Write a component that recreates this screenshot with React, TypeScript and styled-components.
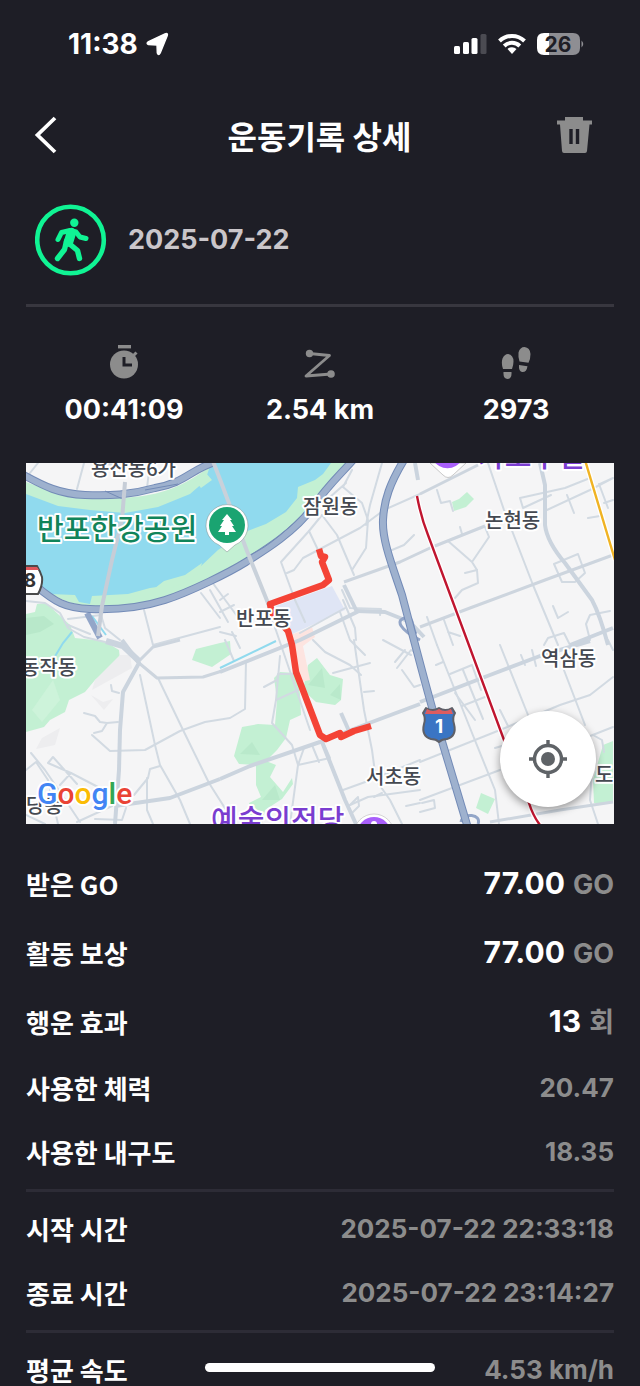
import React from "react";
import styled, { createGlobalStyle } from "styled-components";

const latin = `Inter, "Noto Sans CJK KR", sans-serif`;
const korean = `"Noto Sans CJK KR", Inter, sans-serif`;

const GlobalStyle = createGlobalStyle`
  *, *::before, *::after { box-sizing: border-box; }
  body { margin: 0; background: #1e1e26; }
`;

const Screen = styled.div`
  position: relative;
  height: 100vh;
  overflow: hidden;
  display: flex;
  flex-direction: column;
  background: #1e1e26;
  color: #fff;
  font-family: ${latin};
`;

const StatusBar = styled.div`
  flex: none;
  height: 88px;
  padding: 0 56px 0 68px;
  display: flex;
  align-items: center;
  justify-content: space-between;
`;

const StatusGroup = styled.div<{ $gap: number }>`
  display: flex;
  align-items: center;
  gap: ${(p) => p.$gap}px;
`;

const Clock = styled.span`
  font-size: 28px;
  line-height: 32px;
  font-weight: 700;
`;

const Header = styled.header`
  flex: none;
  height: 94px;
  padding: 0 48px 0 30px;
  display: grid;
  grid-template-columns: 52px 1fr 35px;
  align-items: center;
`;

const Title = styled.h1`
  margin: 0;
  text-align: center;
  font-family: ${korean};
  font-size: 32px;
  line-height: 36px;
  font-weight: 700;
`;

const IconButton = styled.button`
  display: flex;
  padding: 0;
  border: 0;
  background: none;
  color: inherit;
  cursor: pointer;
`;

const Content = styled.main`
  flex: 1;
  min-height: 0;
  overflow-y: auto;
  scrollbar-width: none;
  padding: 0 26px;
`;

const Activity = styled.section`
  height: 116px;
  padding-left: 9px;
  display: flex;
  align-items: center;
  gap: 21px;
`;

const ActivityDate = styled.time`
  font-size: 27px;
  line-height: 32px;
  font-weight: 700;
  color: #cac6ca;
`;

const Rule = styled.hr<{ $strong?: boolean }>`
  height: 3px;
  margin: ${(p) => (p.$strong ? 6 : 5)}px 0 ${(p) => (p.$strong ? 0 : 5)}px;
  border: 0;
  background: ${(p) => (p.$strong ? "#38373f" : "#2d2c36")};
`;

const Stats = styled.section`
  display: grid;
  grid-template-columns: repeat(3, 1fr);
  padding: 38px 0 37px;
`;

const Stat = styled.div`
  display: flex;
  flex-direction: column;
  align-items: center;
  gap: 13px;
  color: #8c8c8c;
`;

const StatValue = styled.span`
  color: #fff;
  font-size: 27px;
  line-height: 32px;
  font-weight: 700;
`;

const MapFrame = styled.section`
  position: relative;
  overflow: hidden;
  background: #f5f5f6;
`;

const MapDrawing = styled.svg`
  display: block;
  width: 100%;
  height: auto;
`;

const MapText = styled.text`
  font-family: ${korean};
  font-weight: 500;
  stroke: #fff;
  stroke-width: 4px;
  stroke-linejoin: round;
  paint-order: stroke;
`;

const PlaceName = styled(MapText)`
  font-size: 20px;
  fill: #454951;
`;

const Landmark = styled(MapText)<{ $park?: boolean }>`
  font-size: 29px;
  fill: ${(p) => (p.$park ? "#11845a" : "#7a3dd0")};
`;

const Brand = styled(MapText)`
  font-family: Roboto, sans-serif;
  font-size: 30px;
`;

const ShieldNumber = styled.text`
  font-family: Inter, sans-serif;
  font-size: 19px;
  font-weight: 700;
  text-anchor: middle;
`;

const LocateButton = styled.button`
  position: absolute;
  right: 18px;
  bottom: 17px;
  width: 96px;
  height: 96px;
  padding: 0;
  border: 0;
  border-radius: 50%;
  background: #fff;
  box-shadow: 0 3px 8px rgba(0, 0, 0, 0.4);
  display: flex;
  align-items: center;
  justify-content: center;
  cursor: pointer;
`;

const Details = styled.section`
  padding: 25px 0 40px;
`;

const List = styled.dl`
  margin: 0;
`;

const Row = styled.div<{ $tall?: boolean }>`
  height: ${(p) => (p.$tall ? 69 : 64)}px;
  display: flex;
  align-items: center;
  justify-content: space-between;
`;

const Label = styled.dt`
  font-family: ${korean};
  font-size: 26px;
  line-height: 30px;
  font-weight: 700;
`;

const Value = styled.dd`
  margin: 0;
  display: flex;
  align-items: baseline;
  gap: 8px;
  font-size: 26px;
  line-height: 32px;
  font-weight: 700;
  color: #8c8c8c;
`;

const Amount = styled.span`
  font-size: 30px;
  color: #fff;
`;

const Unit = styled.span`
  font-size: 27px;
`;

const HomeIndicator = styled.div`
  position: absolute;
  left: 32%;
  right: 32%;
  bottom: 14px;
  height: 9px;
  border-radius: 5px;
  background: #fff;
`;

const BatteryLevel = styled.text`
  font-family: Inter, sans-serif;
  font-size: 21px;
  font-weight: 700;
  text-anchor: middle;
  fill: #1e1e26;
`;

const minorRoads = [
  // north bank
  "M26 478 L38 463 M77 489 L84 463 M147 488 L150 463 M100 463 L150 470",
  // banpo and jamwon
  "M268 607 L310 730",
  "M322 515 L337 535 L354 575 M322 515 L309 531 L281 562 L295 600",
  "M309 531 L319 552 M343 487 L362 503 L368 520 L366 548 L352 570",
  "M382 463 L370 505 L366 525 M287 573 L294 570 L303 558 L360 528 L384 510 L420 494",
  "M343 487 L352 470 M330 497 L346 483 M392 550 L404 545 L414 535",
  "M144 610 L153 645 L220 627 M210 590 L228 622 M201 593 L220 618",
  "M220 600 L228 594 M220 612 L234 605 M212 582 L240 620 M220 632 L236 636",
  "M295 600 L305 622 M300 633 L345 608 M343 600 L355 628 L356 640",
  "M342 590 L350 608 L381 609 L380 615 M340 612 L350 640 L365 655",
  // centre
  "M246 661 L245 709 L230 718 L205 722 L180 731 L145 750 L110 751 L92 735",
  "M225 640 L234 661 M232 632 L240 648",
  "M313 640 L325 652 L350 665 L361 675 M280 656 L276 700 L272 723 L292 745 L298 765 L290 824",
  "M264 687 L277 680 L278 674 L298 674 M276 700 L298 690",
  "M354 640 L364 710 L372 750 L376 780 L390 800 L402 824",
  "M333 673 L370 663 M364 692 L374 691",
  "M298 765 L330 758 L322 740 M312 745 L319 762 M298 765 L304 748",
  "M343 790 L368 781 L420 760 M350 805 L368 797 L420 790",
  "M350 805 L358 797 L359 806 L352 813 M374 797 L382 793 M406 806 L420 803",
  "M383 640 L411 655 M397 668 L411 650 L420 655 M402 670 L414 687 L420 685 M395 662 L405 650",
  // west
  "M140 675 L155 745 L160 765 L180 800 L190 824",
  "M158 678 L184 732 L209 783 L235 824",
  "M84 713 L95 716 L100 722 L107 723 L118 722 M107 723 L102 731 L94 733",
  "M111 685 L112 691 L119 693 M48 763 L53 757 L77 784 M48 763 L71 773 L60 785",
  "M31 753 L45 770 L60 792 L80 822 M26 770 L36 762 L48 780 L58 824",
  "M71 773 L98 787 M134 795 L148 778 L150 769 L160 766 M147 778 L147 810 L153 824",
  "M26 815 L45 824 M77 822 L112 806 M95 819 L122 820 L126 808",
  "M26 601 L45 603 L60 613 L68 628 L84 637 L105 642 M68 625 L90 634",
  "M68 619 L101 615 M101 615 L105 628 L120 640",
  // east
  "M488 463 L504 510 L533 585 L558 645",
  "M437 490 L441 503 L450 501 L453 511 M460 527 L462 534",
  "M448 541 L472 562 L489 537 L485 527 M472 562 L477 570 L478 583 L462 590 L455 598",
  "M465 573 L477 570 M520 498 L565 488 L590 478 M520 498 L523 508 L551 495",
  "M547 510 L590 490 L613 478 M567 495 L574 513 M599 484 L608 508 M600 484 L613 478 M588 518 L600 516",
  "M613 500 L604 503 M554 564 L578 554 L585 573 L575 582 L562 582 L554 564",
  "M553 606 L558 618 L568 612 M544 645 L548 638 L564 633 L570 645",
  "M610 611 L590 615 L586 624 L590 640 M427 617 L437 645 M444 620 L453 645 M448 632 L460 636",
  "M500 645 L530 720 L535 745 M562 665 L585 725",
  "M437 645 L470 728 L495 790 L499 824",
  "M450 674 L472 665 M463 670 L483 719 M472 665 L481 690 M455 693 L475 720 M462 706 L485 697",
  "M436 665 L443 662 M521 655 L525 665 M532 650 L536 666 M500 710 L508 726",
  "M420 762 L500 730 L560 705 L590 695 L613 677 M613 727 L580 740",
  "M420 800 L500 770 M495 748 L505 745 M420 812 L435 808 L434 800 L422 803",
  "M593 735 L602 740 L604 752 M592 770 L590 800 L598 824 M608 640 L613 650",
];

const mediumRoads = [
  "M344 582 L400 562 L430 548 L485 526",
  "M420 627 L470 608 L545 580 L613 555",
  "M490 822 L560 810 L613 802",
  "M420 494 L478 465",
  "M139 663 L157 678 L203 677 L222 671",
  "M139 661 L153 647 L180 640",
];

const mainRoads = [
  "M344 585 L357 612 L300 640 L220 672",
  "M357 611 L385 612 L410 622 L424 637",
  "M420 702 L490 675 L540 656 L590 641",
  "M570 645 L613 628",
  "M220 779 L250 766 L320 742 L372 722 L420 704",
  "M322 742 L345 800 L356 824",
  "M115 806 L170 798 L220 779",
  "M540 463 L545 485 L545 525 Q547 542 565 563 L592 600 Q600 615 608 645",
  "M415 463 L418 480",
  "M341 713 L349 731",
  "M122 640 L139 663 L123 692 L120 730 L119 770 L115 824",
];

const highways = [
  "M20 473 C45 487 60 494 85 495 S130 495 155 488 C185 483 190 470 215 462",
  "M36 586 C55 602 65 608 90 609 S140 608 165 600 S230 572 246 562 S295 532 312 508 S340 475 353 460",
  "M404 460 C390 483 384 500 383 520 S392 565 402 595 C414 640 428 695 438 728 L468 828",
];

const subwayLine = "M417 496 C420 512 424 525 428 535 L467 640 L504 740 L529 803 Q533 816 540 825";
const yellowLine = "M585 460 L615 560";

function SeoulMap() {
  return (
    <MapDrawing viewBox="26 463 588 361" role="img" aria-label="이동 경로 지도">
      <rect x="26" y="463" width="588" height="361" fill="#f5f5f6" />

      {/* river and its banks */}
      <path d="M26 482 C60 495 90 500 120 498 C165 496 185 485 215 463 H350 L312 508 C290 535 240 566 200 583 C160 603 130 608 90 606 C65 604 50 595 26 575Z" fill="#c3f0d3" />
      <path d="M26 494 L58 506 L90 510 L125 513 L158 507 L190 494 L205 481 L211 463 H331 L323 474 L315 480 L298 487 L297 498 L286 512 L266 524 L245 532 L218 550 L200 567 L178 584 L150 588 L128 594 L92 596 L90 604 L79 602 L75 595 L50 594 L26 575Z" fill="#90daee" />
      <path d="M155 588 L164 581 L185 575 L202 563 L199 573 L181 584 L171 588Z M195 481 L206 473 L212 480 L201 488Z" fill="#c3f0d3" />

      {/* parks */}
      <path d="M26 614 L35 612 L37 604 L46 603 L70 625 L75 638 L104 641 L119 650 L120 660 L95 680 L85 692 L69 700 L65 712 L50 720 L44 727 L26 732Z" fill="#c3f0d3" />
      <path d="M26 618 L44 616 L54 624 L40 632 L26 635Z" fill="#b8e8ca" />
      <path d="M32 710 L46 690 L53 680 L60 700 L42 722Z" fill="#cdf3da" />
      <path d="M54 658 L63 643 L72 632" fill="none" stroke="#90daee" strokeWidth="2" />
      <path d="M192 660 L196 649 L220 643 L230 641 L231 654 L212 667Z" fill="#c3f0d3" />
      <path d="M303 690 L308 665 L317 658 L330 675 L343 679 L341 700 L335 705 L316 702Z" fill="#c3f0d3" />
      <path d="M274 678 L280 672 L296 673 L300 694 L301 715 L290 720 L286 738 L277 750 L266 761 L276 765 L270 777 L283 792 L292 778 L293 784 L282 799 L265 810 L262 824 L250 815 L249 803 L261 797 L256 785 L256 765 L239 764 L234 756 L242 727 L258 724 L275 725 L277 700Z" fill="#c3f0d3" />
      <path d="M240 754 L252 742 L260 755Z M262 800 L275 785 L280 800Z M308 685 L322 668 L325 688Z M330 695 L340 684 L341 700Z" fill="#b9e9cb" />
      <path d="M452 502 L459 499 L467 492 L474 499 L466 507 L454 511Z M481 793 L495 799 L488 814 L476 808Z M603 745 L613 741 L613 803 L594 803 L593 780Z" fill="#c3f0d3" />
      <path d="M120 655 L95 680 L92 690 L132 668 L130 655Z M91 695 L103 702 L113 699 L104 710Z M36 749 L42 738 L60 728 L55 745Z" fill="#ededef" />

      {/* shopping and hospital blocks */}
      <path d="M276 606 L332 586 L345 610 L288 636Z" fill="#dfe5f5" />
      <path d="M288 636 L312 627 L315 637 L303 646 L310 680 L300 682 L294 655Z" fill="#fde4e0" />

      <g fill="none" stroke="#d2dae2" strokeWidth="2" strokeLinejoin="round" strokeLinecap="round">
        {minorRoads.map((d) => <path key={d} d={d} />)}
      </g>
      <g fill="none" stroke="#cdd5de" strokeWidth="3" strokeLinejoin="round">
        {mediumRoads.map((d) => <path key={d} d={d} />)}
      </g>
      <g fill="none" stroke="#cbd4de" strokeWidth="4" strokeLinejoin="round">
        {mainRoads.map((d) => <path key={d} d={d} />)}
        <path d="M106 641 L123 646 L139 661" strokeWidth="6" />
      </g>
      <path d="M220 668 L276 641 M92 616 L106 635" fill="none" stroke="#90daee" strokeWidth="2" />

      {/* expressways */}
      <path d="M87 613 L100 638" fill="none" stroke="#93a6c8" strokeWidth="6" />
      <path d="M420 640 C400 630 395 620 405 618 S411 627 416 634 M461 822 C463 812 482 814 478 824" fill="none" stroke="#93a6c8" strokeWidth="3" />
      <g fill="none" stroke="#738bb7" strokeWidth="8">
        {highways.map((d) => <path key={d} d={d} />)}
      </g>
      <g fill="none" stroke="#9eb1ce" strokeWidth="6">
        {highways.map((d) => <path key={d} d={d} />)}
      </g>
      <path d="M250 555 C270 546 290 527 305 512 M145 490 L178 484 M105 491 L125 500" fill="none" stroke="#738bb7" strokeWidth="1" />

      {/* bridges */}
      <path d="M125 482 L122 520 L112 560 L102 606 L98 636" fill="none" stroke="#c6cdd7" strokeWidth="4" />
      <path d="M211 456 L221 482 L247 551 L270 608" fill="none" stroke="#c9d1da" strokeWidth="4" />

      {/* subway lines */}
      <g fill="none">
        <path d={subwayLine} stroke="#fff" strokeWidth="5" />
        <path d={subwayLine} stroke="#c0152f" strokeWidth="2.400" />
        <path d={yellowLine} stroke="#fff" strokeWidth="5" />
        <path d={yellowLine} stroke="#f0b323" strokeWidth="2.400" />
      </g>

      {/* recorded route */}
      <path d="M319 549 L321 556 L325 557 L322 562 L329 580 L323 585 L270 604 L272 613 L288 631 L292 645 L296 672 L301 685 L320 735 L326 739 L340 733 L341 737 L354 731 L371 726" fill="none" stroke="#f44336" strokeWidth="6.500" strokeLinejoin="round" />

      <PlaceName x="91" y="476">용산동6가</PlaceName>
      <PlaceName x="303" y="514">잠원동</PlaceName>
      <PlaceName x="485" y="528">논현동</PlaceName>
      <PlaceName x="236" y="626">반포동</PlaceName>
      <PlaceName x="541" y="666">역삼동</PlaceName>
      <PlaceName x="21" y="675">동작동</PlaceName>
      <PlaceName x="366" y="784">서초동</PlaceName>
      <PlaceName x="595" y="782">도</PlaceName>
      <PlaceName x="26" y="813">당동</PlaceName>
      <Landmark $park x="37" y="540">반포한강공원</Landmark>
      <Landmark x="211" y="831">예술의전당</Landmark>
      <Landmark x="478" y="467">가로수길</Landmark>

      {/* park pin */}
      <path d="M227 552 L219 545 A21 21 0 1 1 235 545Z" fill="#fff" stroke="#7b8b8b" strokeOpacity=".5" />
      <circle cx="227" cy="525" r="18" fill="#1aa471" />
      <path d="M227 514 L232 520 H230 L234 526 H232 L236 532 H229 V535 H225 V532 H218 L222 526 H220 L224 520 H222Z" fill="#fff" />

      {/* purple pins cut by the map edges */}
      <path d="M430 463 L443 475 Q448 480 453 475 L466 463Z" fill="#fff" stroke="#999" strokeOpacity=".5" />
      <path d="M433 460 A17 17 0 0 0 462 460Z" fill="#a95ffb" />
      <circle cx="374" cy="834" r="20" fill="#fff" stroke="#999" strokeOpacity=".4" />
      <circle cx="374" cy="834" r="17" fill="#a95ffb" />
      <circle cx="374" cy="824" r="3" fill="#fff" />

      {/* route 88 shield */}
      <path d="M18 566 H37 Q40 571 42 577 Q43 585 38 594 H18Z" fill="#fff" stroke="#4b4b4b" strokeWidth="2" />
      <path d="M18 567 H37 L39 570 H18Z" fill="#e0575b" />
      <ShieldNumber x="30" y="587" fill="#333">8</ShieldNumber>

      {/* expressway 1 shield */}
      <path d="M426 708 Q433 712 439 708 Q445 712 452 708 L455 713 Q452 718 454 724 Q457 736 447 739 Q442 739 439 742 Q436 739 431 739 Q421 736 424 724 Q426 718 423 713Z" fill="#3a75c4" stroke="#5e6068" strokeWidth="2" strokeLinejoin="round" />
      <path d="M427 709 Q433 713 439 709 Q445 713 451 709 L453 714 H425Z" fill="#dc5c60" />
      <ShieldNumber x="439" y="733" fill="#fff">1</ShieldNumber>

      <Brand x="37" y="804">
        <tspan fill="#4285f4">G</tspan>
        <tspan fill="#ea4335">o</tspan>
        <tspan fill="#fbbc05">o</tspan>
        <tspan fill="#4285f4">g</tspan>
        <tspan fill="#34a853">l</tspan>
        <tspan fill="#ea4335">e</tspan>
      </Brand>
    </MapDrawing>
  );
}

const LocationArrow = () => (
  <svg width="23" height="24" viewBox="0 0 23 24" aria-hidden="true">
    <path d="M2 10 L19 1.800 Q22.300 .6 21.200 3.800 L14.200 21 Q12.500 24 11.300 21 L11 13 L2.500 12.500 Q0 11.500 2 10Z" fill="#fff" stroke="#fff" strokeWidth="1.400" strokeLinejoin="round" />
  </svg>
);

const Signal = () => (
  <svg width="33" height="22" viewBox="0 0 33 22" aria-hidden="true" fill="#fff">
    <rect x="0" y="13" width="6" height="8" rx="1.500" />
    <rect x="9" y="9" width="6" height="12" rx="1.500" />
    <rect x="17.500" y="5" width="6" height="16" rx="1.500" />
    <rect x="26.500" y="1" width="6" height="20" rx="1.500" fill="#4b4b52" />
  </svg>
);

const Wifi = () => (
  <svg width="28" height="22" viewBox="0 0 28 22" aria-hidden="true">
    <g fill="none" stroke="#fff" strokeWidth="4">
      <path d="M1.500 8 A18 18 0 0 1 26.500 8" />
      <path d="M6.200 13 A11.200 11.200 0 0 1 21.800 13" />
    </g>
    <path d="M9.500 16 A6.500 6.500 0 0 1 18.500 16 L14 21Z" fill="#fff" />
  </svg>
);

const Battery = () => (
  <svg width="47" height="24" viewBox="0 0 47 24" role="img" aria-label="배터리 26%">
    <path d="M7 1 H13 V23 H7 Q0 23 0 16 V8 Q0 1 7 1Z" fill="#fff" />
    <path d="M12 1 H36 Q43 1 43 8 V16 Q43 23 36 23 H12Z" fill="#8e8e93" />
    <path d="M44.500 8.500 Q48 12 44.500 15.500Z" fill="#8e8e93" />
    <BatteryLevel x="21" y="20">26</BatteryLevel>
  </svg>
);

const BackIcon = () => (
  <svg width="30" height="40" viewBox="0 0 30 40" aria-hidden="true">
    <path d="M25 3 L7.500 20 L25 37" fill="none" stroke="#fff" strokeWidth="3.800" />
  </svg>
);

const TrashIcon = () => (
  <svg width="35" height="36" viewBox="0 0 35 36" aria-hidden="true">
    <path d="M8 0 H26 V3.500 H35 V7.500 H32.500 L30 34 Q29.800 36 28 36 H7 Q5.200 36 5 34 L3 7.500 H0 V3.500 H8Z M12.300 12 V27 H15.700 V12Z M18.800 12 V27 H22.200 V12Z" fill="#8c8c8c" fillRule="evenodd" />
  </svg>
);

const WalkBadge = () => (
  <svg width="72" height="72" viewBox="0 0 72 72" role="img" aria-label="걷기">
    <circle cx="35.500" cy="36" r="33.300" fill="none" stroke="#10f494" strokeWidth="4.600" />
    <circle cx="39.300" cy="18.700" r="4.200" fill="#10f494" />
    <g fill="none" stroke="#10f494" strokeLinecap="round" strokeLinejoin="round">
      <path d="M23 35.500 L26.500 28.500 L35 26.500 L41 28 L45 33 L51 34.500" strokeWidth="5" />
      <path d="M36.500 28.500 L33.500 38" strokeWidth="9.500" />
      <path d="M31.500 37 L29.500 45.500 L22.500 54.500 M34 39.500 L42.500 46.500 L44.500 54.500" strokeWidth="5.400" />
    </g>
  </svg>
);

const StopwatchIcon = () => (
  <svg width="36" height="36" viewBox="0 0 36 36" aria-hidden="true">
    <rect x="12" y="0" width="13" height="3.400" fill="currentColor" />
    <circle cx="18" cy="19.500" r="14" fill="currentColor" />
    <path d="M27 11 L30.500 7.500" stroke="currentColor" strokeWidth="3" />
    <path d="M18 12 V20 H26" fill="none" stroke="#1e1e26" strokeWidth="3" />
  </svg>
);

const RouteIcon = () => (
  <svg width="36" height="36" viewBox="0 0 36 36" aria-hidden="true">
    <path d="M7.500 8.500 L27.500 10.500 L4 31 L29 29" fill="none" stroke="currentColor" strokeWidth="2.800" strokeLinejoin="round" />
    <circle cx="7.500" cy="8.500" r="3.700" fill="currentColor" />
    <circle cx="29" cy="29" r="3.800" fill="currentColor" />
  </svg>
);

const StepsIcon = () => (
  <svg width="36" height="36" viewBox="0 0 36 36" aria-hidden="true" fill="currentColor">
    <path d="M5 24 Q3 18 4.500 13.500 Q6.500 9 10 9 Q15.500 10 15.500 16.500 Q15.500 20 14 24Z M5.500 27 H13.500 Q14 34 9.500 34 Q5 34 5.500 27Z" />
    <path d="M21.500 16.500 Q20 12 20.500 7.500 Q22 2 26.500 2 Q32 2.500 32.500 9 Q32.500 14 30.500 17.800Z M21 20 L29.500 21.200 Q28.500 27.500 24 27 Q20.500 26 21 20Z" />
  </svg>
);

const LocateIcon = () => (
  <svg width="38" height="38" viewBox="0 0 38 38" aria-hidden="true">
    <circle cx="19" cy="19" r="13.500" fill="none" stroke="#5f6367" strokeWidth="3.400" />
    <circle cx="19" cy="19" r="7" fill="#5f6367" />
    <path d="M19 0 V5 M19 33 V38 M0 19 H5 M33 19 H38" stroke="#5f6367" strokeWidth="3.400" />
  </svg>
);

const stats = [
  { icon: <StopwatchIcon />, value: "00:41:09" },
  { icon: <RouteIcon />, value: "2.54 km" },
  { icon: <StepsIcon />, value: "2973" },
];

const rewards = [
  { label: "받은 GO", amount: "77.00", unit: "GO" },
  { label: "활동 보상", amount: "77.00", unit: "GO" },
  { label: "행운 효과", amount: "13", unit: "회" },
];

const groups = [
  [
    { label: "사용한 체력", value: "20.47" },
    { label: "사용한 내구도", value: "18.35" },
  ],
  [
    { label: "시작 시간", value: "2025-07-22 22:33:18" },
    { label: "종료 시간", value: "2025-07-22 23:14:27" },
  ],
  [{ label: "평균 속도", value: "4.53 km/h" }],
];

export default function App() {
  return (
    <>
      <GlobalStyle />
      <Screen>
        <StatusBar>
          <StatusGroup $gap={8}>
            <Clock>11:38</Clock>
            <LocationArrow />
          </StatusGroup>
          <StatusGroup $gap={11}>
            <Signal />
            <Wifi />
            <Battery />
          </StatusGroup>
        </StatusBar>

        <Header>
          <IconButton type="button" aria-label="뒤로">
            <BackIcon />
          </IconButton>
          <Title>운동기록 상세</Title>
          <IconButton type="button" aria-label="삭제">
            <TrashIcon />
          </IconButton>
        </Header>

        <Content>
          <Activity>
            <WalkBadge />
            <ActivityDate dateTime="2025-07-22">2025-07-22</ActivityDate>
          </Activity>
          <Rule $strong />
          <Stats>
            {stats.map((s) => (
              <Stat key={s.value}>
                {s.icon}
                <StatValue>{s.value}</StatValue>
              </Stat>
            ))}
          </Stats>

          <MapFrame>
            <SeoulMap />
            <LocateButton type="button" aria-label="내 위치">
              <LocateIcon />
            </LocateButton>
          </MapFrame>

          <Details>
            <List>
              {rewards.map((r) => (
                <Row key={r.label} $tall>
                  <Label>{r.label}</Label>
                  <Value>
                    <Amount>{r.amount}</Amount>
                    <Unit>{r.unit}</Unit>
                  </Value>
                </Row>
              ))}
            </List>
            {groups.map((rows, i) => (
              <React.Fragment key={rows[0].label}>
                {i > 0 && <Rule />}
                <List>
                  {rows.map((r) => (
                    <Row key={r.label}>
                      <Label>{r.label}</Label>
                      <Value>{r.value}</Value>
                    </Row>
                  ))}
                </List>
              </React.Fragment>
            ))}
          </Details>
        </Content>
        <HomeIndicator />
      </Screen>
    </>
  );
}
